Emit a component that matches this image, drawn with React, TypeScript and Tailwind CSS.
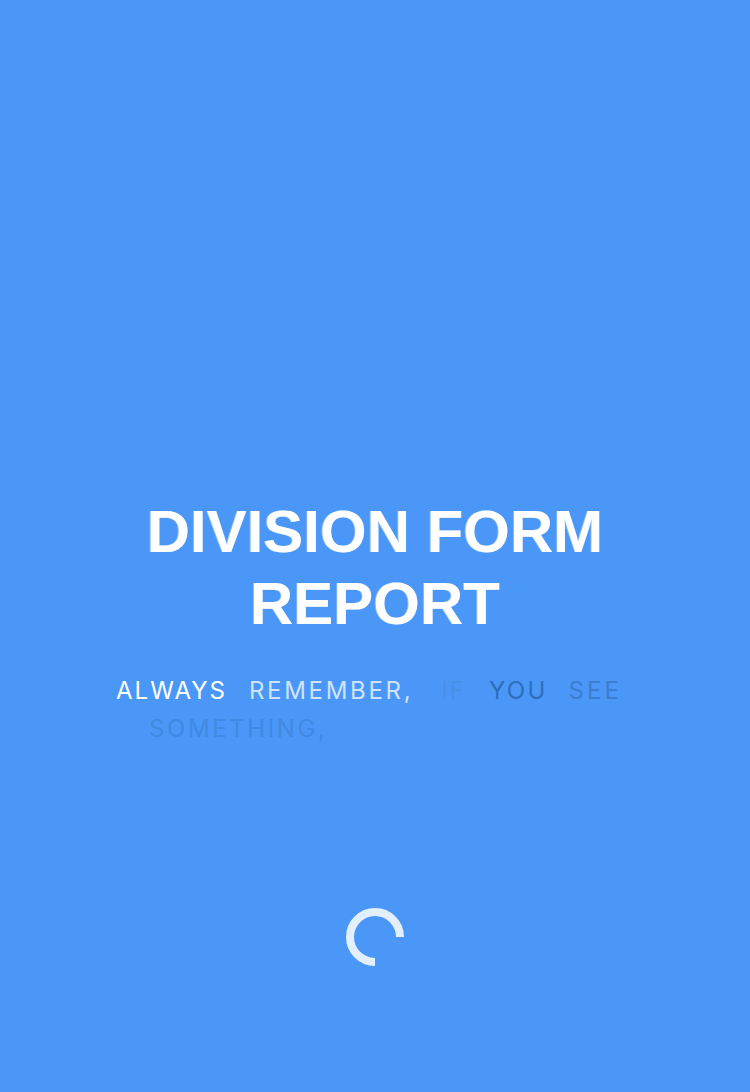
export default function App() {
  return (
    <div className="w-full h-screen bg-[#4A97F8] flex flex-col items-center overflow-hidden">
      <h1
        className="mt-[496px] text-center text-white font-bold text-[60px] leading-[72px] tracking-[0px]"
        style={{ fontFamily: '"Liberation Sans", Arial, sans-serif', textShadow: '-1px 0 0 rgba(255,255,255,0.35)' }}
      >
        DIVISION FORM
        <br />
        REPORT
      </h1>
      <div
        className="mt-[32px] w-[518px] flex flex-wrap text-[24px] leading-[38px] tracking-[2px]"
        style={{ fontFamily: 'Inter, "Noto Sans", sans-serif' }}
      >
        <span className="text-white mr-[22px]">ALWAYS</span>
        <span className="text-[#CFE3FC] mr-[28px] tracking-[2.7px]">REMEMBER,</span>
        <span className="text-[#4A8FE8] mr-[23px]">IF</span>
        <span className="text-[#2D6EBB] mr-[21px] tracking-[2.3px]">YOU</span>
        <span className="text-[#3A7ED2] tracking-[3px]">SEE</span>
        <span className="text-[#4189E2] ml-[33px] tracking-[2.6px]">SOMETHING,</span>
      </div>
      <svg className="mt-[158px]" width="62" height="62" viewBox="0 0 62 62">
        <path
          d="M 56 31 A 25 25 0 1 0 31 56"
          fill="none"
          stroke="#E3EFFD"
          strokeWidth="8"
        />
      </svg>
    </div>
  );
}
